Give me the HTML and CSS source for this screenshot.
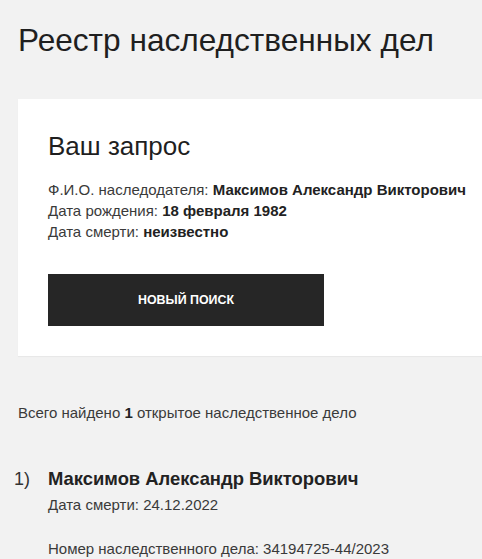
FILE: index.html
```html
<!DOCTYPE html>
<html lang="ru">
<head>
<meta charset="utf-8">
<link rel="stylesheet" href="styles.css">
</head>
<body>
<main class="page">
  <h1 class="title">Реестр наследственных дел</h1>
  <section class="card">
    <h2 class="card-title">Ваш запрос</h2>
    <div class="info">
      <div>Ф.И.О. наследодателя: <b>Максимов Александр Викторович</b></div>
      <div>Дата рождения: <b>18 февраля 1982</b></div>
      <div>Дата смерти: <b>неизвестно</b></div>
    </div>
    <button class="btn">НОВЫЙ ПОИСК</button>
  </section>
  <p class="total">Всего найдено <b>1</b> открытое наследственное дело</p>
  <ol class="results">
    <li class="result">
      <span class="num">1)</span>
      <div class="result-body">
        <div class="name">Максимов Александр Викторович</div>
        <div class="meta">Дата смерти: 24.12.2022</div>
        <div class="meta case">Номер наследственного дела: 34194725-44/2023</div>
      </div>
    </li>
  </ol>
</main>
</body>
</html>
```
FILE: styles.css
```css
* { box-sizing: border-box; }
html, body { margin: 0; padding: 0; }
body {
  background: #f2f2f2;
  font-family: "Liberation Sans", Arial, sans-serif;
  color: #222;
  overflow: hidden;
}
.page {
  padding: 22px 0 0 18px;
}
.title {
  margin: 0;
  font-size: 31.6px;
  font-weight: 400;
  line-height: 36px;
  color: #1f1f1f;
  white-space: nowrap;
}
.card {
  margin-top: 41px;
  background: #fff;
  padding: 32px 0 30px 30px;
  box-shadow: 0 1px 1px rgba(0,0,0,0.04);
}
.card-title {
  margin: 0;
  font-size: 26px;
  font-weight: 400;
  line-height: 30px;
  color: #1f1f1f;
}
.info {
  margin-top: 18px;
  font-size: 15px;
  line-height: 21px;
  color: #3a3a3a;
  white-space: nowrap;
}
.info b { color: #222; }
.btn {
  display: block;
  margin-top: 32px;
  width: 276px;
  height: 52px;
  background: #262626;
  color: #fff;
  border: 0;
  font-family: "Liberation Sans", Arial, sans-serif;
  font-weight: 700;
  font-size: 12.4px;
  padding: 0;
}
.total {
  margin: 47px 0 0 0;
  font-size: 15px;
  line-height: 20px;
  color: #3a3a3a;
}
.total b { color: #222; }
.results {
  list-style: none;
  margin: 44px 0 0 0;
  padding: 0;
}
.result {
  display: flex;
}
.num {
  width: 34px;
  margin-left: -4px;
  font-size: 18px;
  line-height: 24px;
  color: #333;
}
.name {
  font-size: 18.4px;
  font-weight: 700;
  line-height: 24px;
  color: #222;
}
.meta {
  margin-top: 4px;
  font-size: 15px;
  line-height: 20px;
  color: #3a3a3a;
}
.meta.case { margin-top: 24px; }
```
